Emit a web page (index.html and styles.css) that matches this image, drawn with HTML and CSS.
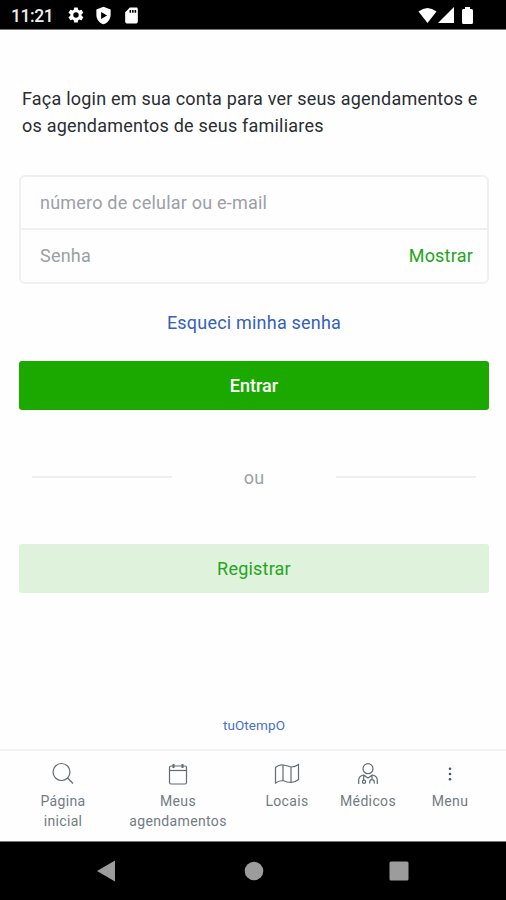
FILE: index.html
```html
<!DOCTYPE html>
<html lang="pt-BR">
<head>
<meta charset="utf-8">
<title>Login</title>
<link rel="stylesheet" href="styles.css">
</head>
<body>
<div class="screen">
  <header class="status">
    <span class="clock">11:21</span>
    <svg class="gear" width="18" height="18" viewBox="0 0 24 24"><path d="M19.4 13a7.500 7.500 0 0 0 0-2l2.100-1.600a.5.5 0 0 0 .1-.7l-2-3.400a.5.5 0 0 0-.6-.2l-2.500 1a7.300 7.300 0 0 0-1.700-1l-.4-2.600a.5.5 0 0 0-.5-.4h-4a.5.5 0 0 0-.5.4L9 5.100a7.300 7.300 0 0 0-1.700 1l-2.500-1a.5.5 0 0 0-.6.2l-2 3.400a.5.5 0 0 0 .1.700L4.500 11a7.500 7.500 0 0 0 0 2l-2.200 1.600a.5.5 0 0 0-.1.700l2 3.400c.1.200.4.300.6.200l2.500-1a7.300 7.300 0 0 0 1.700 1l.4 2.600c0 .2.200.4.500.4h4c.3 0 .5-.2.500-.4l.4-2.600a7.300 7.300 0 0 0 1.700-1l2.500 1c.2.100.5 0 .6-.2l2-3.400a.5.5 0 0 0-.1-.7zM12 15.600a3.600 3.600 0 1 1 0-7.200 3.600 3.600 0 0 1 0 7.200z"/></svg>
    <svg class="shield" width="19" height="19" viewBox="0 0 24 24"><path fill-rule="evenodd" d="M12 1 3 4.500V11c0 5.600 3.800 10.700 9 12 5.200-1.300 9-6.400 9-12V4.500zM9 7.500 16.500 12 9 16.500z"/></svg>
    <svg class="sd" width="19" height="19" viewBox="0 0 24 24"><path fill-rule="evenodd" d="M18 2h-8L4 8v12c0 1.100.9 2 2 2h12c1.100 0 2-.9 2-2V4c0-1.100-.9-2-2-2zM9.500 5v3.500h2V5zm3.200 0v3.500h2V5zm3.200 0v3.500h2V5z"/></svg>
    <span class="spacer"></span>
    <svg width="19" height="17" viewBox="0 0 19 17"><path d="M.5 4.500Q9.500-2.500 18.500 4.500L9.500 16z"/></svg>
    <svg width="16" height="17" viewBox="0 0 16 17"><path d="M16 0v16H0z"/></svg>
    <svg class="battery" width="11" height="17" viewBox="0 0 11 17"><path d="M3 0h5v2h1.500Q11 2 11 3.500v12q0 1.500-1.500 1.500h-8Q0 17 0 15.500v-12Q0 2 1.500 2H3z"/></svg>
  </header>
  <main class="content">
    <p class="intro">Faça login em sua conta para ver seus agendamentos e<br>os agendamentos de seus familiares</p>
    <div class="fields">
      <div class="field"><span>número de celular ou e-mail</span></div>
      <div class="field"><span>Senha</span><a class="show">Mostrar</a></div>
    </div>
    <a class="forgot">Esqueci minha senha</a>
    <div class="button primary"><span>Entrar</span></div>
    <div class="divider"><i></i><span>ou</span><i></i></div>
    <div class="button secondary"><span>Registrar</span></div>
    <a class="brand">tuOtempO</a>
  </main>
  <nav class="tabs">
    <div class="tab"><svg width="24" height="24" viewBox="0 0 24 24"><circle cx="10.500" cy="10" r="8.500"/><path d="m16.500 16 5.500 5.500"/></svg><span>Página<br>inicial</span></div>
    <div class="tab"><svg width="24" height="24" viewBox="0 0 24 24"><rect x="3.500" y="4" width="17" height="18" rx="1.500"/><path d="M3.500 8.500h17"/><path class="strong" d="M7.500 2v4M16.500 2v4"/></svg><span>Meus<br>agendamentos</span></div>
    <div class="tab"><svg width="26" height="24" viewBox="0 0 26 24"><path d="M1.500 5.500Q5 2.500 9 3t8 2q4 0 7.500-2.500v15Q21 20.500 17 20.500T9 18.500q-4 0-7.500 2.500zM9 3v15.500M17 5v15.500"/></svg><span>Locais</span></div>
    <div class="tab"><svg width="24" height="24" viewBox="0 0 24 24"><circle cx="12" cy="6.700" r="5"/><path d="M2.700 22v-3.500q0-4.500 4.800-5.500l4.500 3 4.500-3q4.800 1 4.800 5.500V22M7.700 13.500v4.500M16 13.500v4M13.700 21.500v-1.500q0-2.300 2.300-2.300t2.300 2.300v1.500"/><circle cx="8" cy="19.700" r="1.600"/></svg><span>Médicos</span></div>
    <div class="tab"><svg class="dots" width="24" height="24" viewBox="0 0 24 24"><circle cx="12" cy="6.700" r="1.300"/><circle cx="12" cy="12" r="1.300"/><circle cx="12" cy="17.300" r="1.300"/></svg><span>Menu</span></div>
  </nav>
  <footer class="system">
    <svg width="18" height="22" viewBox="0 0 18 22"><path d="M18 .5v21L0 11z"/></svg>
    <svg class="home" width="20" height="20" viewBox="0 0 20 20"><circle cx="10" cy="10" r="9.300"/></svg>
    <svg width="20" height="20" viewBox="0 0 20 20"><rect x=".5" y=".5" width="19" height="19" rx="1.500"/></svg>
  </footer>
</div>
</body>
</html>
```

FILE: styles.css
```css
* { box-sizing: border-box; }
body { margin: 0; background: #fefefe; font-family: Roboto, "Liberation Sans", sans-serif; }
.screen { width: 506px; height: 900px; display: flex; flex-direction: column; overflow: hidden; }
svg { display: block; flex: none; }
.status { height: 30px; flex: none; display: flex; align-items: center; padding: 1px 33px 0 11px; background: #000; border-bottom: 1px solid #777; color: #eee; fill: #fff; }
.clock { width: 56px; font-size: 17.500px; font-weight: 500; letter-spacing: -.4px; line-height: 28px; padding-top: 2px; }
.shield { margin-left: 9px; }
.sd { margin-left: 9px; }
.spacer { flex: 1; }
.battery { margin-left: 8px; }
.status svg + svg:not([class]) { margin-left: 1px; }
.content { flex: 1; display: flex; flex-direction: column; padding: 55px 17px 0 19px; font-size: 18px; letter-spacing: .21px; }
.intro { margin: 0 0 0 3px; line-height: 27px; color: #292d32; white-space: nowrap; }
.fields { margin-top: 36px; height: 109px; border: 2px solid #eff0f1; border-radius: 6px; }
.field { height: 51px; display: flex; align-items: center; justify-content: space-between; padding: 0 14px 0 19px; color: #9ba0a6; }
.field + .field { height: 54px; padding-bottom: 1px; border-top: 2px solid #eff0f1; }
.show { color: #21a51a; }
.forgot { align-self: center; margin-top: 25px; line-height: 27px; color: #355fbe; }
.button { height: 49px; border-radius: 3px; display: flex; align-items: center; justify-content: center; }
.primary { margin-top: 25px; background: #1ba900; color: #fff; font-weight: 500; letter-spacing: 0; }
.divider { margin: 53px 13px 53px; height: 28px; display: flex; align-items: center; justify-content: space-between; color: #9ba0a6; }
.divider i { width: 140px; height: 2px; background: #eeeff0; }
.secondary { background: #dff2dc; color: #25a51e; }
.brand { align-self: center; margin-top: 122px; font-size: 13.500px; letter-spacing: .1px; line-height: 20px; color: #4770cc; }
.tabs { height: 92px; flex: none; display: grid; grid-template-columns: 94px 136px 82px 80px 84px; padding: 11px 14px 0 16px; border-top: 2px solid #f1f2f3; }
.tab { display: flex; flex-direction: column; align-items: center; color: #737b84; font-size: 14px; line-height: 20px; letter-spacing: .35px; text-align: center; }
.tab svg { fill: none; stroke: #626b74; stroke-width: 1.200; margin-bottom: 5px; }
.tab .dots { fill: #4c555e; stroke: none; }
.strong { stroke-width: 2; }
.system { height: 59px; flex: none; display: flex; align-items: center; justify-content: space-between; padding: 0 97px; background: #000; border-top: 1px solid #777; fill: #9c9c9c; }
.home { margin-left: 3px; }
```
